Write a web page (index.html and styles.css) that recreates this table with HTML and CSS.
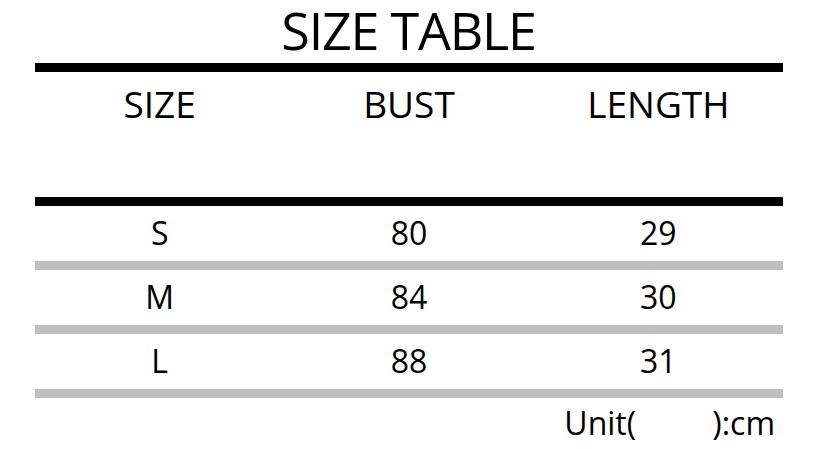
FILE: index.html
```html
<!DOCTYPE html>
<html lang="en">
<head>
<meta charset="utf-8">
<title>Size Table</title>
<link rel="stylesheet" href="styles.css">
</head>
<body>
<div class="sheet">
  <h1 class="title">SIZE TABLE</h1>
  <div class="rule rule-thick"></div>
  <div class="row row-head">
    <div class="cell">SIZE</div>
    <div class="cell">BUST</div>
    <div class="cell">LENGTH</div>
  </div>
  <div class="rule rule-thick"></div>
  <div class="row">
    <div class="cell">S</div>
    <div class="cell">80</div>
    <div class="cell">29</div>
  </div>
  <div class="rule rule-gray"></div>
  <div class="row">
    <div class="cell">M</div>
    <div class="cell">84</div>
    <div class="cell">30</div>
  </div>
  <div class="rule rule-gray"></div>
  <div class="row">
    <div class="cell">L</div>
    <div class="cell">88</div>
    <div class="cell">31</div>
  </div>
  <div class="rule rule-gray"></div>
  <div class="unit">Unit(<span class="blank"></span>):cm</div>
</div>
</body>
</html>
```

FILE: styles.css
```css
html, body {
  margin: 0;
  padding: 0;
  background: #ffffff;
}

body {
  font-family: "Open Sans", "Noto Sans", sans-serif;
  color: #000000;
}

.sheet {
  width: 820px;
  height: 449px;
  padding: 0 37px 0 35px;
  box-sizing: border-box;
  display: flex;
  flex-direction: column;
}

.title {
  margin: 0 0 3px 0;
  font-size: 52px;
  font-weight: 400;
  line-height: 60px;
  letter-spacing: -1.2px;
  text-align: center;
  padding-right: 1px;
}

.rule {
  height: 9px;
  flex: none;
}

.rule-thick {
  background: #000000;
}

.rule-gray {
  background: #bfbfbf;
}

.row {
  display: grid;
  grid-template-columns: 1fr 1fr 1fr;
  height: 55px;
  font-size: 32px;
  line-height: 54px;
}

.cell {
  text-align: center;
}

.row-head {
  height: 125px;
  font-size: 37px;
  line-height: 50px;
  padding-top: 7px;
  box-sizing: border-box;
}

.unit {
  margin-top: 5px;
  font-size: 32px;
  line-height: 40px;
  text-align: right;
  padding-right: 8px;
}

.blank {
  display: inline-block;
  width: 76px;
}
```
